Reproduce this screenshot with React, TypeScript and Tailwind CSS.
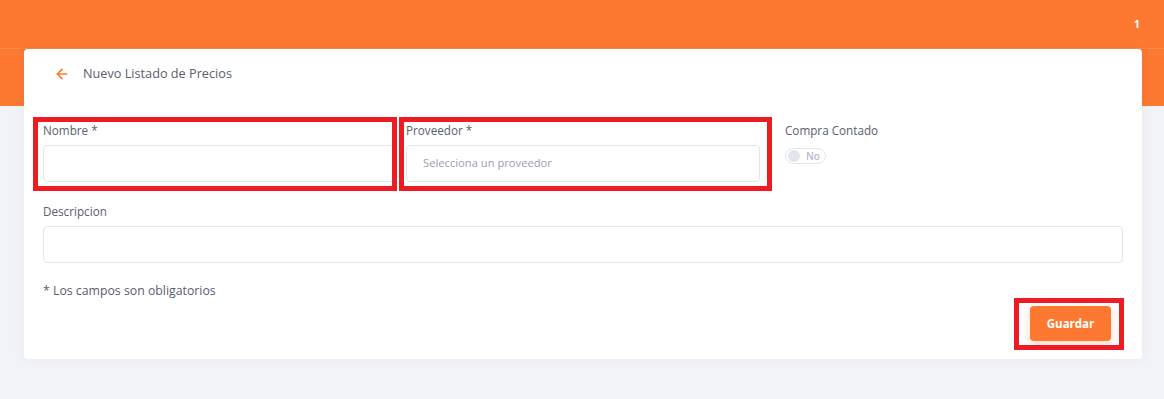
import { ArrowLeft } from 'lucide-react';

function Field({ label, children }: { label: string; children: React.ReactNode }) {
  return (
    <div className="flex flex-col">
      <label className="h-[18px] leading-[18px] text-[11.7px] text-[#595d6e]">{label}</label>
      <div className="mt-[6px]">{children}</div>
    </div>
  );
}

export default function App() {
  return (
    <div className="relative min-h-[399px] bg-[#f2f3f8] font-['Open_Sans','Liberation_Sans',sans-serif]">
      <div className="flex h-[49px] items-center justify-end border-b border-[#fb8a4d] bg-[#fd7831] pr-[24px]">
        <span className="text-[11px] font-bold text-white">1</span>
      </div>

      <div className="bg-[linear-gradient(to_bottom,#fd7831_57px,#f2f3f8_57px)] pb-[40px]">
        <div className="ml-[24px] mr-[22px] rounded-[4px] bg-white shadow-[0_0_13px_rgba(82,63,105,0.05)]">
          <div className="flex h-[50px] items-center gap-[13px] pl-[30px]">
            <ArrowLeft className="h-[16px] w-[16px] text-[#fd7831]" strokeWidth={2.5} />
            <h3 className="text-[12.7px] text-[#595d6e]">Nuevo Listado de Precios</h3>
          </div>

          <div className="px-[19px] pt-[22px] pb-[18px]">
            <div className="flex">
              <div className="w-[353px]">
                <Field label="Nombre *">
                  <div className="h-[37px] rounded-[4px] border border-[#e2e5ec] bg-white" />
                </Field>
              </div>
              <div className="ml-[10px] w-[354px]">
                <Field label="Proveedor *">
                  <div className="flex h-[37px] items-center rounded-[4px] border border-[#e2e5ec] bg-white pl-[16px] text-[11.2px] text-[#9a9eb0]">
                    Selecciona un proveedor
                  </div>
                </Field>
              </div>
              <div className="ml-[25px]">
                <label className="block h-[18px] leading-[18px] text-[11.7px] text-[#595d6e]">Compra Contado</label>
                <div className="mt-[9px] flex h-[16px] w-[41px] items-center rounded-full border border-[#e2e5ec] bg-white pl-[2px]">
                  <span className="h-[12px] w-[12px] rounded-full bg-[#e4e6ef]" />
                  <span className="ml-[6px] text-[10px] font-semibold text-[#b5b9c9]">No</span>
                </div>
              </div>
            </div>

            <div className="mt-[20px]">
              <Field label="Descripcion">
                <div className="h-[37px] rounded-[4px] border border-[#e2e5ec] bg-white" />
              </Field>
            </div>

            <p className="mt-[19px] h-[18px] leading-[18px] text-[12.3px] text-[#595d6e]">* Los campos son obligatorios</p>

            <div className="mt-[6px] flex justify-end pr-[12px]">
              <button className="h-[35px] w-[81px] rounded-[4px] bg-[#fd7831] text-[11.5px] font-bold text-white shadow-[0_3px_8px_rgba(253,120,49,0.3)]">
                Guardar
              </button>
            </div>
          </div>
        </div>
      </div>

      {/* annotation boxes */}
      <div className="pointer-events-none absolute left-[33px] top-[117px] h-[74px] w-[364px] border-[5px] border-[#ed1c24]" />
      <div className="pointer-events-none absolute left-[399px] top-[117px] h-[74px] w-[373px] border-[5px] border-[#ed1c24]" />
      <div className="pointer-events-none absolute left-[1014px] top-[298px] h-[52px] w-[110px] border-[5px] border-[#ed1c24]" />
    </div>
  );
}
